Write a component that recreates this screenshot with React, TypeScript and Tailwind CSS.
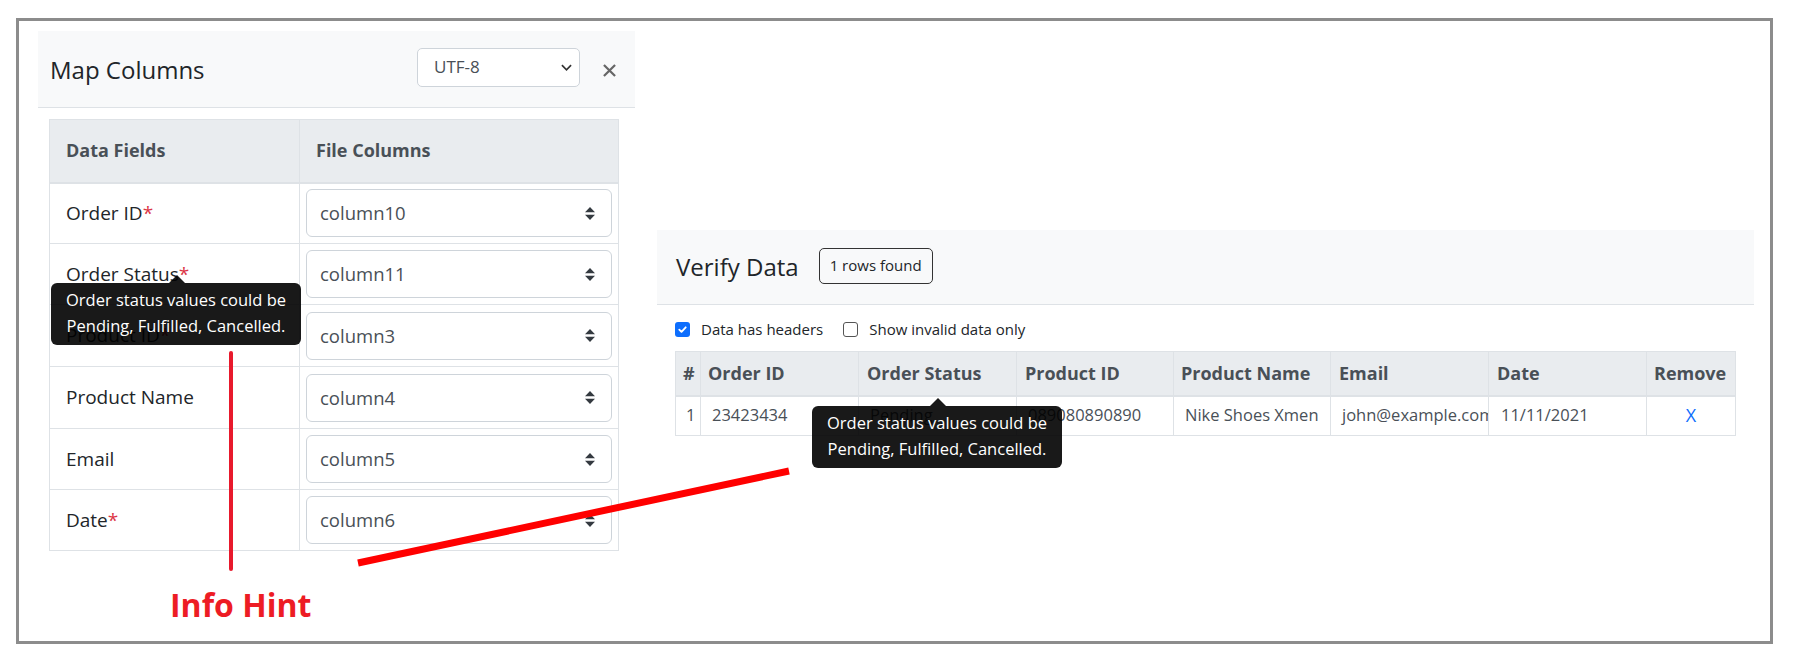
import React from "react"

const mapRows = [
    { label: "Order ID", required: true, column: "column10", h: "h-[61px]" },
    { label: "Order Status", required: true, column: "column11", h: "h-[61px]" },
    { label: "Product ID", required: true, column: "column3", h: "h-[62px]" },
    { label: "Product Name", required: false, column: "column4", h: "h-[62px]" },
    { label: "Email", required: false, column: "column5", h: "h-[61px]" },
    { label: "Date", required: true, column: "column6", h: "h-[61px]" },
]

const verifyCols = [
    { name: "#", w: "w-[25px]", th: "px-[7px]", td: "px-[10px] text-[#212529]" },
    { name: "Order ID", w: "w-[158px]", th: "px-[7px]", td: "px-[11px]" },
    { name: "Order Status", w: "w-[158px]", th: "px-[8px]", td: "px-[11px]" },
    { name: "Product ID", w: "w-[157px]", th: "px-[8px]", td: "px-[11px]" },
    { name: "Product Name", w: "w-[157px]", th: "px-[7px]", td: "px-[11px]" },
    { name: "Email", w: "w-[158px]", th: "px-[8px]", td: "px-[11px]" },
    { name: "Date", w: "w-[158px]", th: "px-[8px]", td: "px-[12px]" },
    { name: "Remove", w: "w-[89px]", th: "px-[7px] text-center", td: "text-center" },
]

const verifyRow = ["1", "23423434", "Pending", "089080890890", "Nike Shoes Xmen", "john@example.com", "11/11/2021"]

function DoubleArrow() {
    return (
        <svg viewBox="0 0 4 5" className="w-[10px] h-[13px]" preserveAspectRatio="none">
            <path d="M2 0L0 2h4zm0 5L0 3h4z" fill="#343a40" />
        </svg>
    )
}

function Tooltip({ className }: { className: string }) {
    return (
        <div className={"absolute w-[250px] h-[62px] rounded-[6px] bg-black/90 text-white text-[16.5px] leading-[26px] text-center pt-[4px] " + className}>
            <span className="absolute -top-[8px] left-[118px] w-0 h-0 border-x-[8px] border-x-transparent border-b-[8px] border-b-black/90" />
            Order status values could be
            <br />
            Pending, Fulfilled, Cancelled.
        </div>
    )
}

function MapColumns() {
    return (
        <div className="ml-[19px] mt-[10px] w-[597px] shrink-0">
            <div className="h-[77px] bg-[#f8f9fa] border-b border-[#dee2e6] flex items-center pl-[12px] pr-[19px]">
                <h4 className="text-[24px] font-medium text-[#212529] mt-[1px]">Map Columns</h4>
                <div className="ml-auto w-[163px] h-[39px] mt-[-4px] bg-white border border-[#ced4da] rounded-[5px] flex items-center pl-[16px] pr-[7px] text-[17px] text-[#495057]">
                    UTF-8
                    <svg viewBox="0 0 12 7" className="ml-auto w-[11px] h-[7px]">
                        <path d="M1 1l5 5 5-5" fill="none" stroke="#333" strokeWidth="1.8" />
                    </svg>
                </div>
                <svg viewBox="0 0 14 14" className="ml-[23px] w-[13px] h-[13px] mt-[2px]">
                    <path d="M1 1l12 12M13 1L1 13" stroke="#666" strokeWidth="2.4" />
                </svg>
            </div>
            <div className="pl-[11px] pt-[11px]">
                <table className="w-[570px] border-collapse border border-[#dee2e6] table-fixed">
                    <thead>
                        <tr className="h-[63px] bg-[#e9ecef]">
                            <th className="w-[250px] border border-[#dee2e6] border-b-2 text-left pl-[16px] text-[18px] font-bold text-[#495057]">Data Fields</th>
                            <th className="border border-[#dee2e6] border-b-2 text-left pl-[16px] text-[18px] font-bold text-[#495057]">File Columns</th>
                        </tr>
                    </thead>
                    <tbody>
                        {mapRows.map((r) => (
                            <tr key={r.label} className={r.h}>
                                <td className="border border-[#dee2e6] pl-[16px] text-[19px] text-[#212529]">
                                    {r.label}
                                    {r.required && <span className="text-[#dc3545]">*</span>}
                                </td>
                                <td className="border border-[#dee2e6] px-[6px]">
                                    <div className="h-[48px] border border-[#ced4da] rounded-[6px] flex items-center pl-[13px] pr-[16px] text-[18.5px] text-[#495057]">
                                        {r.column}
                                        <span className="ml-auto">
                                            <DoubleArrow />
                                        </span>
                                    </div>
                                </td>
                            </tr>
                        ))}
                    </tbody>
                </table>
            </div>
        </div>
    )
}

function Checkbox({ checked }: { checked: boolean }) {
    if (checked) {
        return (
            <span className="shrink-0 w-[15px] h-[15px] rounded-[3px] bg-[#0d6efd] flex items-center justify-center">
                <svg viewBox="0 0 12 12" className="w-[11px] h-[11px]">
                    <path d="M2.5 6.2l2.4 2.4 4.6-5" fill="none" stroke="white" strokeWidth="2" strokeLinecap="round" strokeLinejoin="round" />
                </svg>
            </span>
        )
    }
    return <span className="shrink-0 block w-[15px] h-[15px] rounded-[3px] border-[1.5px] border-[#555] bg-white" />
}

function VerifyData() {
    return (
        <div className="ml-[22px] mt-[209px] w-[1097px] shrink-0">
            <div className="h-[75px] bg-[#f8f9fa] border-b border-[#dee2e6] flex items-center pl-[19px]">
                <h4 className="text-[24px] font-medium text-[#212529]">Verify Data</h4>
                <span className="ml-[20px] mt-[-3px] h-[36px] px-[10px] border border-[#333] rounded-[5px] flex items-center text-[15px] text-[#212529]">1 rows found</span>
            </div>
            <div className="pl-[18px] pt-[17px]">
                <div className="h-[15px] flex items-center text-[15px] text-[#212529]">
                    <Checkbox checked />
                    <span className="ml-[11px]">Data has headers</span>
                    <span className="ml-[20px] flex">
                        <Checkbox checked={false} />
                    </span>
                    <span className="ml-[11px]">Show invalid data only</span>
                </div>
                <table className="mt-[14px] w-[1060px] border-collapse border border-[#dee2e6] table-fixed">
                    <thead>
                        <tr className="h-[44px] bg-[#e9ecef]">
                            {verifyCols.map((c) => (
                                <th key={c.name} className={"border border-[#dee2e6] border-b-2 text-left text-[18px] font-bold text-[#495057] whitespace-nowrap " + c.w + " " + c.th}>
                                    {c.name}
                                </th>
                            ))}
                        </tr>
                    </thead>
                    <tbody>
                        <tr className="h-[40px]">
                            {verifyRow.map((v, i) => (
                                <td key={i} className={"border border-[#dee2e6] text-[16.5px] text-[#495057] whitespace-nowrap overflow-hidden " + verifyCols[i].td}>
                                    {v}
                                </td>
                            ))}
                            <td className="border border-[#dee2e6] text-center text-[18px] text-[#0d6efd]">X</td>
                        </tr>
                    </tbody>
                </table>
            </div>
        </div>
    )
}

export default function App() {
    return (
        <div className="relative w-[1800px] h-[659px] bg-white pl-[16px] pt-[18px] font-['Open_Sans',sans-serif]">
            <div className="w-[1757px] h-[626px] border-[3px] border-[#8c8c8c] flex items-start">
                <MapColumns />
                <VerifyData />
            </div>

            <Tooltip className="left-[51px] top-[283px]" />
            <Tooltip className="left-[812px] top-[406px]" />

            {/* annotation */}
            <svg className="absolute inset-0 pointer-events-none" width="1800" height="659">
                <line x1="231" y1="353" x2="231" y2="569" stroke="#e8192c" strokeWidth="4" strokeLinecap="round" />
                <line x1="358" y1="563" x2="789" y2="471" stroke="#ff0000" strokeWidth="7" />
            </svg>
            <div className="absolute left-[170px] top-[589px] text-[32px] leading-none font-bold text-[#ed1c24]">Info Hint</div>
        </div>
    )
}
